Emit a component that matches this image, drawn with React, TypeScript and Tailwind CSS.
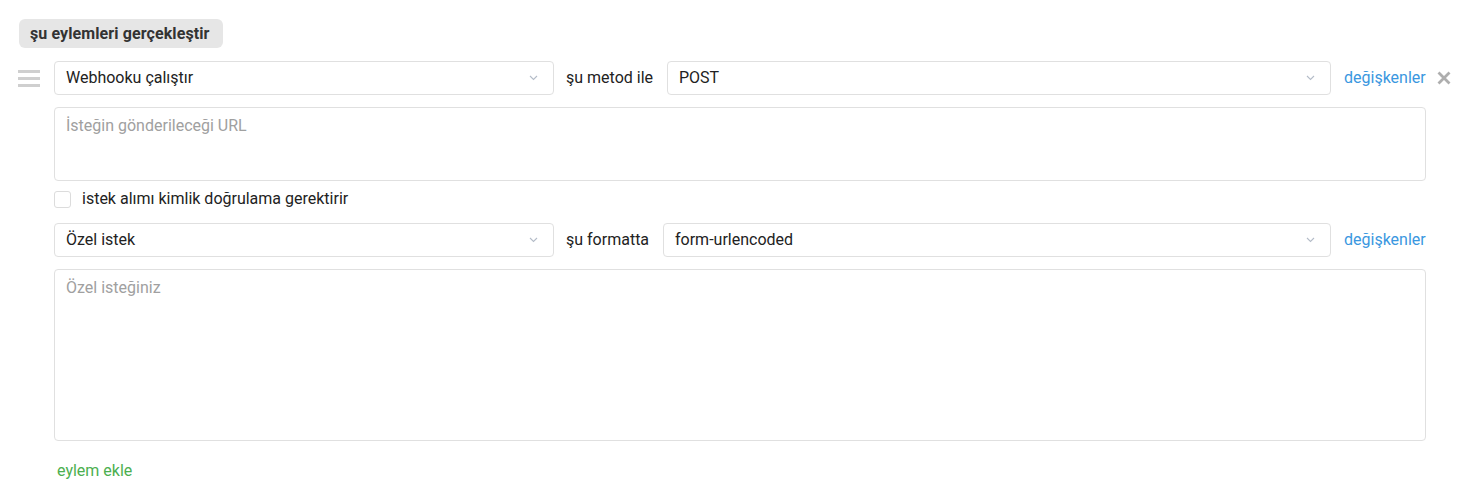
import React from "react";

function Chevron() {
  return (
    <svg width="9" height="6" viewBox="0 0 9 6" className="shrink-0">
      <path d="M1 1l3.5 3.5L8 1" fill="none" stroke="#b4bcc8" strokeWidth="1.1" />
    </svg>
  );
}

function Select({ value, width }: { value: string; width: string }) {
  return (
    <div
      className={`${width} h-[34px] shrink-0 flex items-center justify-between pl-[11px] pr-[15px] border border-[#e0e0e0] rounded bg-white text-[16px] text-[#222]`}
    >
      <span className="whitespace-nowrap">{value}</span>
      <Chevron />
    </div>
  );
}

function Link({ children }: { children: React.ReactNode }) {
  return <span className="text-[16px] text-[#3a97e0] whitespace-nowrap cursor-pointer">{children}</span>;
}

export default function App() {
  return (
    <div
      className="w-[1469px] h-[497px] bg-white pt-[19px] pl-[18px]"
      style={{ fontFamily: "Roboto, 'Liberation Sans', sans-serif" }}
    >
      <div className="inline-flex items-center h-[29px] pl-[11px] pr-[13px] ml-[1px] rounded-md bg-[#e6e6e6] text-[16px] font-bold text-[#333] tracking-[0.1px] whitespace-nowrap">
        şu eylemleri gerçekleştir
      </div>

      <div className="flex mt-[13px]">
        <div className="w-[36px] shrink-0 pt-[9px]">
          <div className="flex flex-col gap-[4px] w-[22px]">
            <div className="h-[3px] bg-[#cfcfcf]" />
            <div className="h-[3px] bg-[#cfcfcf]" />
            <div className="h-[3px] bg-[#cfcfcf]" />
          </div>
        </div>

        <div className="w-[1372px] flex flex-col">
          <div className="flex items-center h-[34px]">
            <Select value="Webhooku çalıştır" width="w-[500px]" />
            <span className="w-[113px] shrink-0 pl-[12px] text-[16px] text-[#222] whitespace-nowrap">şu metod ile</span>
            <Select value="POST" width="w-[664px]" />
            <span className="ml-[13px]">
              <Link>değişkenler</Link>
            </span>
            <svg width="14" height="14" viewBox="0 0 14 14" className="ml-[11px] shrink-0">
              <path d="M1.5 1.5l11 11M12.5 1.5l-11 11" stroke="#aeaeae" strokeWidth="2.8" />
            </svg>
          </div>

          <div className="mt-[12px] h-[74px] border border-[#e0e0e0] rounded px-[11px] pt-[6px] text-[16px] text-[#a0a0a0]">
            İsteğin gönderileceği URL
          </div>

          <div className="flex items-center mt-[9px] h-[18px]">
            <div className="w-[17px] h-[17px] shrink-0 border border-[#dcdcdc] rounded-[3px] bg-white" />
            <span className="ml-[11px] text-[16px] text-[#222] whitespace-nowrap">istek alımı kimlik doğrulama gerektirir</span>
          </div>

          <div className="flex items-center h-[34px] mt-[15px]">
            <Select value="Özel istek" width="w-[500px]" />
            <span className="w-[109px] shrink-0 pl-[12px] text-[16px] text-[#222] whitespace-nowrap">şu formatta</span>
            <Select value="form-urlencoded" width="w-[668px]" />
            <span className="ml-[13px]">
              <Link>değişkenler</Link>
            </span>
          </div>

          <div className="mt-[12px] h-[172px] border border-[#e0e0e0] rounded px-[11px] pt-[6px] text-[16px] text-[#a0a0a0]">
            Özel isteğiniz
          </div>

          <div className="mt-[18px] pl-[3px] text-[16px] text-[#4caf50]">eylem ekle</div>
        </div>
      </div>
    </div>
  );
}
